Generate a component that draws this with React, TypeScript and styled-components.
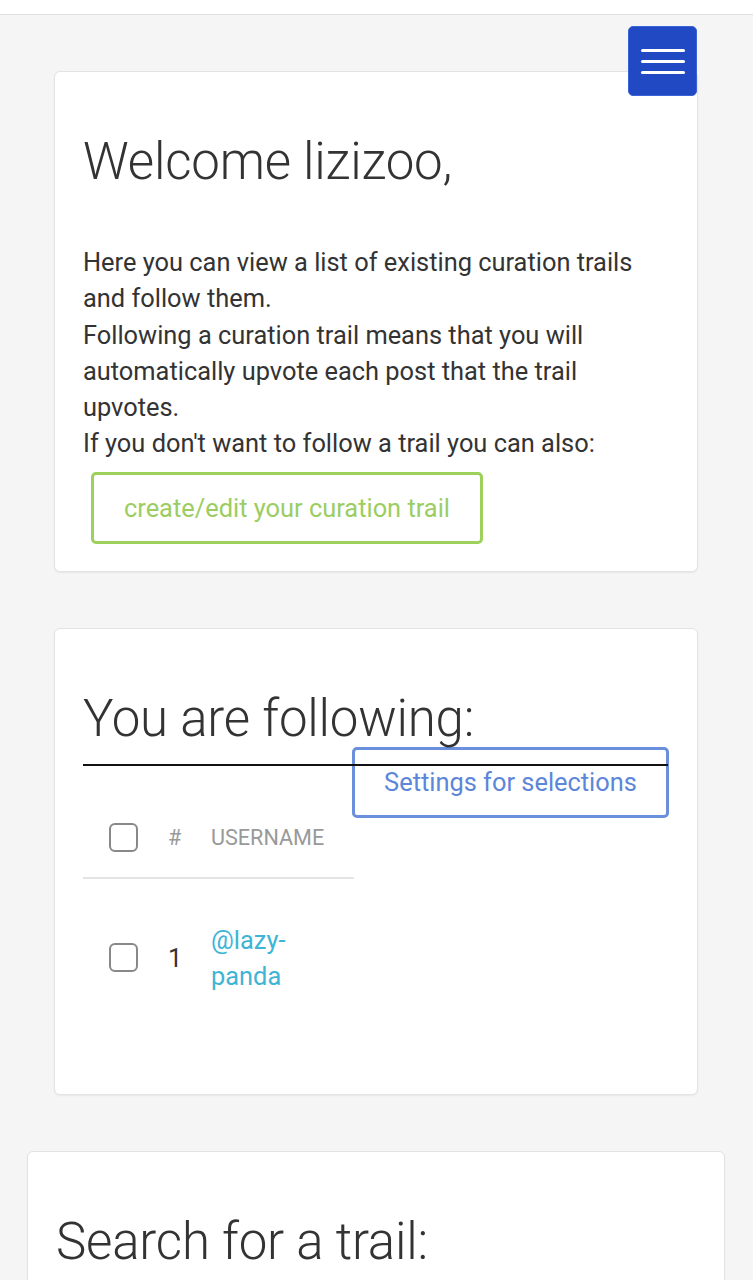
import styled, {createGlobalStyle} from "styled-components";

const GlobalStyle = createGlobalStyle`
  html, body {
    margin: 0;
    padding: 0;
    background: #f5f5f5;
    font-family: Roboto, "Liberation Sans", sans-serif;
    color: #333;
  }
  * { box-sizing: border-box; }
`;

const Page = styled.div`
  position: relative;
  min-height: 1280px;
  overflow: hidden;
`;

const TopBar = styled.div`
  height: 15px;
  background: #fff;
  border-bottom: 1px solid #e2e2e2;
`;

const MenuButton = styled.button`
  position: absolute;
  top: 26px;
  right: 56px;
  width: 69px;
  height: 70px;
  border: 1px solid #3a63d8;
  border-radius: 5px;
  background: #2249c4;
  display: flex;
  flex-direction: column;
  align-items: center;
  justify-content: center;
  gap: 8px;
  padding: 0;
  z-index: 2;
`;

const MenuBar = styled.span`
  display: block;
  width: 44px;
  height: 3px;
  border-radius: 2px;
  background: #fff;
`;

const Content = styled.main`
  display: flex;
  flex-direction: column;
  gap: 56px;
  padding-top: 56px;
`;

const Card = styled.section<{$wide?: boolean}>`
  background: #fff;
  border: 1px solid #e3e3e3;
  border-radius: 6px;
  box-shadow: 0 1px 2px rgba(0, 0, 0, 0.06);
  margin: ${(p) => (p.$wide ? "0 28px 0 27px" : "0 55px 0 54px")};
  padding: ${(p) => (p.$wide ? "60px 28px 40px 28px" : "60px 29px 27px 28px")};
`;

const Title = styled.h1`
  margin: 0;
  font-size: 51px;
  font-weight: 300;
  line-height: 60px;
  color: #333;
  letter-spacing: -0.2px;
`;

const Intro = styled.p`
  margin: 52px 0 0 0;
  font-size: 25.4px;
  line-height: 36.3px;
  color: #333;
`;

const OutlineButton = styled.button<{$color: string; $text: string}>`
  font-family: Roboto, "Liberation Sans", sans-serif;
  font-size: 25.4px;
  line-height: 36px;
  background: #fff;
  color: ${(p) => p.$text};
  border: 3px solid ${(p) => p.$color};
  border-radius: 5px;
`;

const TrailButton = styled(OutlineButton)`
  margin: 10px 0 0 8px;
  padding: 15px 30px 15px 30px;
`;

const FollowHeader = styled.div`
  position: relative;
  z-index: 1;
  border-bottom: 2px solid #111;
  padding-bottom: 15px;
`;

const SettingsRow = styled.div`
  display: flex;
  justify-content: flex-end;
  margin-top: -19px;
  margin-right: -1px;
`;

const SettingsButton = styled(OutlineButton)`
  width: 317px;
  height: 71px;
  padding: 0;
  background: transparent;
`;

const Table = styled.table`
  border-collapse: collapse;
  width: 271px;
  margin-top: -2px;
`;

const HeadCell = styled.th<{$w?: number}>`
  text-align: left;
  font-weight: 400;
  font-size: 21.6px;
  color: #999;
  padding: 7px 0 25px 0;
  border-bottom: 2px solid #e4e4e4;
  width: ${(p) => (p.$w ? `${p.$w}px` : "auto")};
  vertical-align: middle;
`;

const Cell = styled.td<{$link?: boolean}>`
  padding: 43px 0 73px 0;
  font-size: 25.4px;
  line-height: 36px;
  color: ${(p) => (p.$link ? "#3eb4d6" : "#333")};
  vertical-align: middle;
`;

const Check = styled.span`
  display: block;
  width: 29px;
  height: 29px;
  margin-left: 26px;
  border: 2.5px solid #888;
  border-radius: 6px;
`;

const TrailTitle = styled(Title)`
  margin-top: 0;
`;

const App = () => {
  return (
    <Page>
      <GlobalStyle />
      <TopBar />
      <MenuButton aria-label="menu">
        <MenuBar />
        <MenuBar />
        <MenuBar />
      </MenuButton>
      <Content>
        <Card>
          <Title>Welcome lizizoo,</Title>
          <Intro>
            Here you can view a list of existing curation trails and follow them.
            <br />
            Following a curation trail means that you will automatically upvote each post that
            the trail upvotes.
            <br />
            If you don't want to follow a trail you can also:
          </Intro>
          <TrailButton $color="#9ed15c" $text="#9bcd62">
            create/edit your curation trail
          </TrailButton>
        </Card>
        <Card>
          <FollowHeader>
            <Title>You are following:</Title>
          </FollowHeader>
          <SettingsRow>
            <SettingsButton $color="#6a8fdd" $text="#5c86d9">
              Settings for selections
            </SettingsButton>
          </SettingsRow>
          <Table>
            <thead>
              <tr>
                <HeadCell $w={85}>
                  <Check />
                </HeadCell>
                <HeadCell $w={43}>#</HeadCell>
                <HeadCell>USERNAME</HeadCell>
              </tr>
            </thead>
            <tbody>
              <tr>
                <Cell>
                  <Check />
                </Cell>
                <Cell>1</Cell>
                <Cell $link>
                  @lazy-
                  <br />
                  panda
                </Cell>
              </tr>
            </tbody>
          </Table>
        </Card>
        <Card $wide>
          <TrailTitle>Search for a trail:</TrailTitle>
        </Card>
      </Content>
    </Page>
  );
};

export default App;
